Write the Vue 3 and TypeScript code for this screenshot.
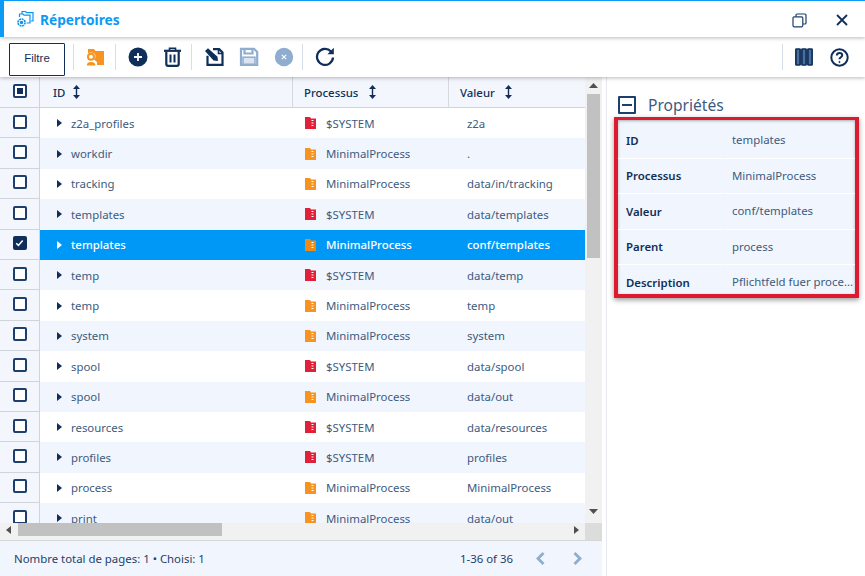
<script setup lang="ts">
interface Row { id: string; proc: string; value: string; sys: boolean; selected?: boolean }
const S = '$SYSTEM'
const M = 'MinimalProcess'
const rows: Row[] = [
  { id: 'z2a_profiles', proc: S, value: 'z2a', sys: true },
  { id: 'workdir', proc: M, value: '.', sys: false },
  { id: 'tracking', proc: M, value: 'data/in/tracking', sys: false },
  { id: 'templates', proc: S, value: 'data/templates', sys: true },
  { id: 'templates', proc: M, value: 'conf/templates', sys: false, selected: true },
  { id: 'temp', proc: S, value: 'data/temp', sys: true },
  { id: 'temp', proc: M, value: 'temp', sys: false },
  { id: 'system', proc: M, value: 'system', sys: false },
  { id: 'spool', proc: S, value: 'data/spool', sys: true },
  { id: 'spool', proc: M, value: 'data/out', sys: false },
  { id: 'resources', proc: S, value: 'data/resources', sys: true },
  { id: 'profiles', proc: S, value: 'profiles', sys: true },
  { id: 'process', proc: M, value: 'MinimalProcess', sys: false },
  { id: 'print', proc: M, value: 'data/out', sys: false },
]
const props = [
  ['ID', 'templates'],
  ['Processus', 'MinimalProcess'],
  ['Valeur', 'conf/templates'],
  ['Parent', 'process'],
  ['Description', 'Pflichtfeld fuer process directories'],
]
const headers = [
  { label: 'ID', cls: 'c-id' },
  { label: 'Processus', cls: 'c-proc' },
  { label: 'Valeur', cls: 'c-val' },
]
</script>

<template>
  <div class="app">
    <header class="titlebar">
      <svg class="title-icon" width="18" height="18" viewBox="0 0 18 18" fill="none" stroke="#0a96ee" stroke-width="1.2">
        <path d="M6 4V1.500h3.500l1 1.200h6.500V11h-2" />
        <path d="M3.500 7V4h3.500l1 1.200h6V13h-3.500" />
        <circle cx="5.500" cy="12.500" r="3.500" stroke-width="1.700" stroke-dasharray="2 .7" />
        <circle cx="5.500" cy="12.500" r="1.100" fill="#0a96ee" />
      </svg>
      <h1 class="title">Répertoires</h1>
      <div class="spacer"></div>
      <svg class="win-btn" width="15" height="15" viewBox="0 0 15 15" fill="none" stroke="#1d3f6b" stroke-width="1.200">
        <rect x="1" y="3.800" width="9.800" height="10" rx="1.200" />
        <path d="M4 3.600V2c0-.6.400-1 1-1h8c.6 0 1 .4 1 1v8c0 .6-.4 1-1 1h-2" />
      </svg>
      <svg class="win-close" width="12" height="12" viewBox="0 0 12 12" stroke="#0f2f5a" stroke-width="1.800" stroke-linecap="round">
        <path d="M1.500 1.500l9 9M10.500 1.500l-9 9" />
      </svg>
    </header>

    <div class="toolbar">
      <button class="filter">Filtre</button>
      <span class="sep"></span>
      <svg class="tool t-folder" width="20" height="20" viewBox="0 0 20 20">
        <path d="M3 2h6l1.500 2H19v14H3z" fill="#f7931e" />
        <path d="M1 19.500V15l2-2.500c-1-1.200-1.500-2-1.500-3C1.500 7 3.500 5.500 6 5.500s4.500 1.500 4.500 4c0 1-.5 1.800-1.500 3l3 2.500v4.500z" fill="#fff" />
        <circle cx="6" cy="9.800" r="3" fill="none" stroke="#f7931e" stroke-width="2" />
        <path d="M1.800 18.500c0-2.500 1.500-3.500 4.200-3.500s4.500 1 4.500 3.500z" fill="#f7931e" />
      </svg>
      <span class="sep sep-a"></span>
      <svg class="tool t-add" width="20" height="20" viewBox="0 0 20 20">
        <circle cx="10" cy="10" r="9.500" fill="#0f2f5a" />
        <path d="M10 6v8M6 10h8" stroke="#fff" stroke-width="1.800" />
      </svg>
      <svg class="tool t-trash" width="20" height="20" viewBox="0 0 20 20" fill="none" stroke="#0f2f5a" stroke-width="2.200">
        <path d="M1 3.800h17" />
        <path d="M6.500 3V1.200h6V3" stroke-width="1.600" />
        <path d="M3.300 4.500V17c0 1 .6 1.800 1.800 1.800h8.800c1.200 0 1.800-.8 1.800-1.800V4.500" />
        <path d="M7.500 7.500v8M11.500 7.500v8" stroke-width="2" />
      </svg>
      <span class="sep sep-b"></span>
      <svg class="tool t-export" width="20" height="20" viewBox="0 0 20 20" fill="none" stroke="#0f2f5a" stroke-width="2.200">
        <path d="M9 2.200h6.200l3.300 3.300v12.300H3.500v-9" />
        <path d="M14.500 2v4.500H19" stroke-width="1.600" />
        <path d="M1 4l3-2.800 9.500 8.500.5 4.300-4.500-.4z" fill="#0f2f5a" stroke="none" />
      </svg>
      <svg class="tool t-save" width="20" height="20" viewBox="0 0 20 20" fill="#dbe5f1" stroke="#8fadcf" stroke-width="2.200">
        <path d="M2 1.800h13l3.200 3.200v13H2z" fill="none" />
        <path d="M5.500 2v4.500h8V2" fill="none" />
        <rect x="4" y="10.200" width="12" height="7" stroke-width="1.500" />
      </svg>
      <svg class="tool t-cancel" width="20" height="20" viewBox="0 0 20 20">
        <circle cx="10" cy="10" r="9.200" fill="#8fadcf" />
        <path d="M7.800 7.800l4.400 4.400M12.200 7.800l-4.400 4.400" stroke="#fff" stroke-width="1.100" />
      </svg>
      <span class="sep sep-c"></span>
      <svg class="tool t-refresh" width="20" height="20" viewBox="0 0 20 20" fill="none" stroke="#0f2f5a" stroke-width="2.300">
        <path d="M16 4.600A8 8 0 1 0 18 10.500" />
        <path d="M18.800 .8v6.400H12.400z" fill="#0f2f5a" stroke="none" />
      </svg>
      <div class="spacer"></div>
      <span class="sep sep-d"></span>
      <svg class="tool t-cols" width="18" height="18" viewBox="0 0 18 18" fill="#4a6f9c" stroke="#0f2f5a" stroke-width="1.700">
        <rect x=".9" y="1" width="4.200" height="16" rx=".6" />
        <rect x="6.900" y="1" width="4.200" height="16" rx=".6" />
        <rect x="12.900" y="1" width="4.200" height="16" rx=".6" />
      </svg>
      <svg class="tool t-help" width="19" height="19" viewBox="0 0 19 19" fill="none" stroke="#0f2f5a" stroke-width="2">
        <circle cx="9.500" cy="9.500" r="8.200" />
        <path d="M6.800 7.500c0-1.600 1.200-2.500 2.700-2.500s2.700.9 2.700 2.300c0 2-2.700 2-2.700 4" />
        <circle cx="9.500" cy="14" r=".6" fill="#0f2f5a" stroke-width="1" />
      </svg>
    </div>

    <main class="content">
      <section class="grid">
        <div class="grid-main">
          <div class="grid-view">
            <div class="head">
              <div class="check-cell head-check"><span class="cb cb-partial"><i></i></span></div>
              <div v-for="h in headers" :key="h.label" class="head-cell" :class="h.cls">
                <span>{{ h.label }}</span>
                <svg width="7" height="14" viewBox="0 0 7 14" fill="#0f2f5a">
                  <path d="M3.500 0L7 4H0zM3.500 14L0 10h7z" />
                  <rect x="2.800" y="3" width="1.400" height="8" />
                </svg>
              </div>
            </div>
            <div class="body">
              <div v-for="(r, i) in rows" :key="i" class="row" :class="{ alt: i % 2 === 1, sel: r.selected }">
                <div class="check-cell">
                  <span class="cb" :class="{ 'cb-on': r.selected }">
                    <svg v-if="r.selected" width="9" height="8" viewBox="0 0 9 8" fill="none" stroke="#fff" stroke-width="1.500"><path d="M1.200 4.200l2.200 2.200 4.300-5" /></svg>
                  </span>
                </div>
                <div class="cell c-id">
                  <svg class="caret" width="5" height="8" viewBox="0 0 5 8"><path d="M0 0l5 4-5 4z" /></svg>
                  <span>{{ r.id }}</span>
                </div>
                <div class="cell c-proc">
                  <svg class="zip" width="11" height="12" viewBox="0 0 11 12">
                    <path d="M0 0h5l1 1.500h5V12H0z" :fill="r.sys ? '#e2203a' : (r.selected ? '#ed8b16' : '#f7931e')" />
                    <path d="M6.500 3h2v1h-2zM6.500 5.500h2v1h-2zM6.500 8h2v1h-2z" fill="#fff" />
                  </svg>
                  <span>{{ r.proc }}</span>
                </div>
                <div class="cell c-val">{{ r.value }}</div>
              </div>
            </div>
          </div>
          <div class="vscroll">
            <svg width="9" height="5" viewBox="0 0 9 5" class="arrow-up"><path d="M4.500 0L9 5H0z" /></svg>
            <div class="vthumb"></div>
            <div class="spacer"></div>
            <svg width="9" height="5" viewBox="0 0 9 5" class="arrow-down"><path d="M0 0h9L4.500 5z" /></svg>
          </div>
        </div>
        <div class="hscroll">
          <svg width="5" height="8" viewBox="0 0 5 8" class="arrow-left"><path d="M5 0v8L0 4z" /></svg>
          <div class="hthumb"></div>
          <div class="spacer"></div>
          <svg width="5" height="8" viewBox="0 0 5 8" class="arrow-right"><path d="M0 0v8l5-4z" /></svg>
          <div class="corner"></div>
        </div>
        <footer class="footer">
          <span>Nombre total de pages: 1 • Choisi: 1</span>
          <div class="spacer"></div>
          <span class="range">1-36 of 36</span>
          <svg class="pager" width="9" height="13" viewBox="0 0 9 13" fill="none" stroke="#8fadcf" stroke-width="2.800"><path d="M7.500 1L2 6.500 7.500 12" /></svg>
          <svg class="pager next" width="9" height="13" viewBox="0 0 9 13" fill="none" stroke="#8fadcf" stroke-width="2.800"><path d="M1.500 1L7 6.500 1.500 12" /></svg>
        </footer>
      </section>

      <aside class="panel">
        <div class="panel-head">
          <span class="collapse"><i></i></span>
          <h2>Propriétés</h2>
        </div>
        <div class="props">
          <div v-for="p in props" :key="p[0]" class="prop">
            <span class="prop-key">{{ p[0] }}</span>
            <span class="prop-val">{{ p[1] }}</span>
          </div>
        </div>
      </aside>
    </main>
  </div>
</template>

<style>
html, body { margin: 0; background: #fff; }
</style>

<style scoped>
* { box-sizing: border-box; }
.app {
  width: 865px;
  height: 576px;
  display: flex;
  flex-direction: column;
  overflow: hidden;
  background: #fff;
  font-family: "Noto Sans", sans-serif;
  font-size: 11.400px;
  color: #3d5b80;
}
.spacer { flex: 1; }

.titlebar {
  height: 37px;
  flex: none;
  display: flex;
  align-items: center;
  border-top: 1px solid #0b9af5;
  border-left: 4px solid #0b9af5;
  padding-left: 12px;
  position: relative;
  z-index: 3;
  box-shadow: 0 1px 4px rgba(0, 0, 0, .28);
  background: #fff;
}
.title {
  margin: 0 0 0 6px;
  font-size: 13.700px;
  font-weight: 700;
  color: #0b9af5;
}
.win-btn { margin: 2px 29px 0 0; }
.win-close { margin: 2px 17px 0 0; }

.toolbar {
  height: 40px;
  flex: none;
  display: flex;
  align-items: center;
  padding-left: 9px;
  position: relative;
  z-index: 2;
  background: #fff;
  box-shadow: 0 1px 4px rgba(0, 0, 0, .28);
}
.filter {
  width: 56px;
  height: 33px;
  margin-top: 5px;
  padding: 0 0 3px;
  background: #fff;
  border: 1px solid #0f2f5a;
  border-radius: 1px;
  font-family: "Liberation Sans", sans-serif;
  font-size: 11.500px;
  color: #0f2f5a;
}
.sep {
  width: 1px;
  height: 26px;
  background: #d5dfea;
  margin-left: 8px;
}
.tool { flex: none; }
.t-folder { margin-left: 11px; }
.sep-a { margin-left: 10px; }
.t-add { margin-left: 12px; }
.t-trash { margin-left: 15px; }
.sep-b { margin-left: 8px; }
.t-export { margin-left: 12px; }
.t-save { margin-left: 15px; }
.t-cancel { margin-left: 15px; }
.sep-c { margin-left: 8px; }
.t-refresh { margin-left: 12px; }
.sep-d { margin: 0 12px 0 0; }
.t-help { margin-left: 17px; margin-right: 16px; }

.content {
  flex: 1;
  display: flex;
  min-height: 0;
}
.grid {
  width: 602px;
  flex: none;
  display: flex;
  flex-direction: column;
}
.grid-main {
  flex: 1;
  min-height: 0;
  display: flex;
}
.grid-view {
  flex: 1;
  min-width: 0;
  overflow: hidden;
}
.head {
  height: 31px;
  display: flex;
  background: #f3f6fd;
}
.check-cell {
  width: 40px;
  flex: none;
  display: flex;
  align-items: center;
  justify-content: center;
  padding-bottom: 2px;
  border-right: 1px solid #cfd4da;
  border-bottom: 1px solid #cfd4da;
  background: #f3f6fd;
}
.head-cell {
  display: flex;
  align-items: center;
  gap: 11px;
  padding-left: 11px;
  border-right: 1px solid #d5d9df;
  border-bottom: 1px solid #cfd4da;
  color: #0f2f5a;
  font-weight: 500;
}
.head-cell.c-id { padding-left: 13px; gap: 8px; }
.head-cell.c-val { border-right: 0; flex: 1; gap: 10px; }
.c-id { width: 253px; flex: none; }
.c-proc { width: 156px; flex: none; }
.c-val { flex: 1; }
.cb {
  width: 14px;
  height: 14px;
  border: 2px solid #1d3f6b;
  border-radius: 2px;
  background: #fff;
  display: flex;
  align-items: center;
  justify-content: center;
}
.cb-partial i {
  width: 6px;
  height: 6px;
  background: #0f2f5a;
}
.cb-on { background: #0f2f5a; border-color: #0f2f5a; }
.row {
  height: 30.400px;
  display: flex;
  background: #fff;
}
.row.alt { background: #f1f5fd; }
.row.sel { background: #0098f7; color: #fff; font-weight: 500; }
.cell {
  display: flex;
  align-items: center;
  white-space: nowrap;
  overflow: hidden;
}
.cell.c-id { padding-left: 17px; }
.caret { fill: #0f2f5a; margin-right: 9px; }
.sel .caret { fill: #fff; }
.cell.c-proc { padding-left: 12px; }
.zip { margin-right: 10px; }
.cell.c-val { padding-left: 18px; }

.vscroll {
  width: 17px;
  flex: none;
  background: #f1f1f1;
  display: flex;
  flex-direction: column;
  align-items: center;
}
.vscroll svg { fill: #505050; flex: none; }
.arrow-up { margin-top: 6px; }
.vthumb {
  width: 13px;
  height: 164px;
  margin-top: 6px;
  background: #c1c1c1;
}
.arrow-down { margin-bottom: 9px; }
.hscroll {
  height: 18px;
  flex: none;
  display: flex;
  align-items: flex-start;
  background: #f1f1f1;
  padding-left: 6px;
  border-bottom: 1px solid #d5d5d5;
}
.hscroll svg { fill: #505050; flex: none; margin-top: 3px; }
.hthumb {
  width: 204px;
  height: 13px;
  margin-left: 7px;
  background: #c1c1c1;
}
.arrow-right { margin-right: 6px; }
.corner {
  width: 17px;
  height: 17px;
  background: #dcdcdc;
}
.footer {
  height: 35px;
  flex: none;
  display: flex;
  align-items: center;
  padding: 0 20px 0 14px;
  background: #f1f5fd;
  color: #1d3f6b;
}
.range { margin-right: 23px; }
.next { margin-left: 28px; }

.panel {
  flex: 1;
  min-width: 0;
  padding: 19px 6px 0 7px;
  margin-left: 4px;
  border-left: 1px solid #e6e9ef;
}
.panel-head {
  display: flex;
  align-items: center;
  height: 18px;
  padding-left: 4px;
}
.collapse {
  width: 18px;
  height: 18px;
  border: 2px solid #1d3f6b;
  border-radius: 1px;
  display: flex;
  align-items: center;
  justify-content: center;
}
.collapse i { width: 10px; height: 2px; background: #1d3f6b; }
.panel-head h2 {
  margin: 0 0 0 12px;
  font-size: 15.600px;
  font-weight: 400;
  color: #3d5b80;
}
.props {
  height: 181px;
  margin-top: 3px;
  padding-top: 3px;
  overflow: hidden;
  border: solid #dc1c2e;
  border-width: 3px 4px 4px;
  background: #f1f5fd;
  box-shadow: 0 2px 5px rgba(0, 0, 0, .4), inset 0 1px 3px rgba(0, 0, 0, .3);
}
.prop {
  height: 35.500px;
  display: flex;
  gap: 1px;
}
.prop-key {
  width: 105px;
  flex: none;
  display: flex;
  align-items: center;
  padding-left: 8px;
  border-bottom: 1px solid #fff;
  font-weight: 600;
  color: #0f2f5a;
}
.prop-val {
  flex: 1;
  min-width: 0;
  padding-left: 8px;
  line-height: 34.500px;
  white-space: nowrap;
  overflow: hidden;
  text-overflow: ellipsis;
  border-bottom: 1px solid #fff;
}
</style>
